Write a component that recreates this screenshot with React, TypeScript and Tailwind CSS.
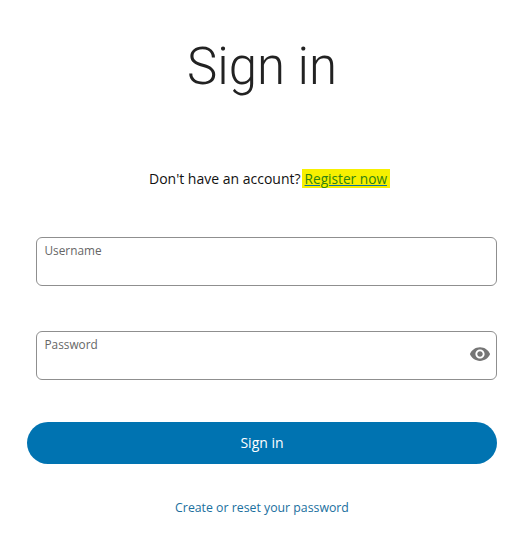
import React from 'react';

const sans = 'font-["Open_Sans",sans-serif]';

const Field: React.FC<{ label: string; children?: React.ReactNode }> = ({ label, children }) => (
    <div className="relative ml-[9px] h-[49px] rounded-[6px] border border-[#8f8f8f] bg-white pl-[7.5px] pt-[4px]">
        <div className="text-[11.8px] leading-[17px] text-[#666666]">{label}</div>
        {children}
    </div>
);

const App: React.FC = () => {
    return (
        <div className={`h-[537px] w-[524px] overflow-hidden bg-white pl-[27px] pr-[27px] ${sans}`}>
            <h1 className='mt-[33px] text-center font-["Roboto",sans-serif] text-[51px] leading-[68px] font-light text-[#222222]'>
                Sign in
            </h1>

            <p className="mt-[68px] pl-[15px] text-center text-[14px] leading-[19px] text-[#111111]">
                Don't have an account?
                <a className="ml-[1px] bg-[#f7f000] px-[3px] text-[13.7px] text-[#2f8210] underline decoration-[#0b6ea8]">Register now</a>
            </p>

            {/* Form fields */}
            <div className="mt-[49px] flex flex-col gap-[45px]">
                <Field label="Username" />
                <Field label="Password">
                    <svg
                        className="absolute top-[11px] right-[5px] h-[22px] w-[22px] fill-[#757575]"
                        viewBox="0 0 24 24"
                    >
                        <path d="M12 4.5C7 4.5 2.73 7.61 1 12c1.73 4.39 6 7.5 11 7.5s9.27-3.11 11-7.5c-1.73-4.39-6-7.5-11-7.5zM12 17c-2.76 0-5-2.24-5-5s2.24-5 5-5 5 2.24 5 5-2.24 5-5 5zm0-8c-1.66 0-3 1.34-3 3s1.34 3 3 3 3-1.34 3-3-1.34-3-3-3z" />
                    </svg>
                </Field>
            </div>

            <button className="mt-[42px] h-[42px] w-full rounded-full bg-[#0073b1] pb-[2px] text-[14px] font-medium text-white">
                Sign in
            </button>

            <div className="mt-[35px] text-center text-[12.3px] leading-[17px] text-[#1a6f9e]">
                Create or reset your password
            </div>
        </div>
    );
};

export default App;
